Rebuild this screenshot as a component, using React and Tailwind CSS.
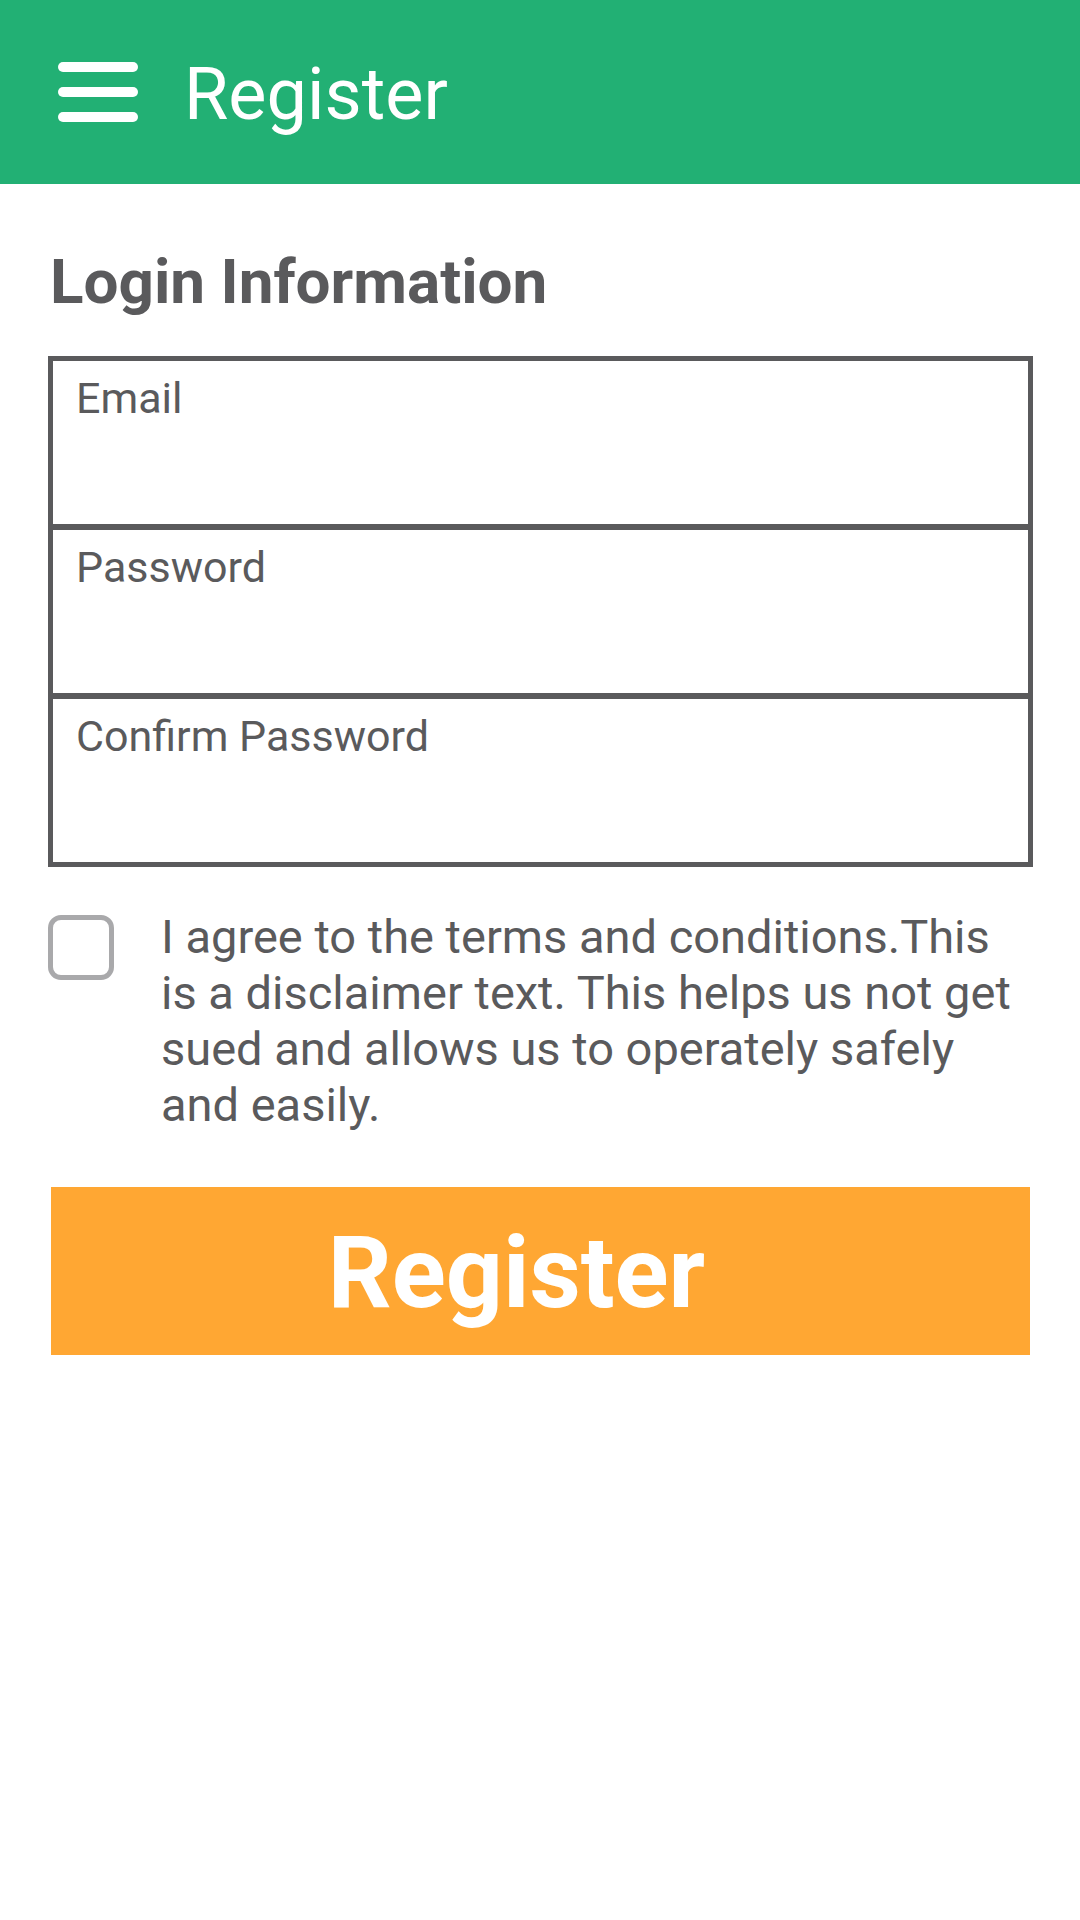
const fields = ["Email", "Password", "Confirm Password"];

const MenuIcon = () => (
  <svg width="80" height="60" viewBox="0 0 80 60" fill="none">
    <line x1="5" y1="5" x2="75" y2="5" stroke="white" strokeWidth="10" strokeLinecap="round" />
    <line x1="5" y1="30" x2="75" y2="30" stroke="white" strokeWidth="10" strokeLinecap="round" />
    <line x1="5" y1="55" x2="75" y2="55" stroke="white" strokeWidth="10" strokeLinecap="round" />
  </svg>
);

export default function App() {
  return (
    <div className="min-h-screen w-[1080px] bg-white font-['Roboto',sans-serif] text-[#5a5a5c]">
      <header className="flex h-[184px] items-center bg-[#22b074] pl-[58px]">
        <MenuIcon />
        <h1 className="ml-[46px] mt-[6px] text-[72px] font-normal leading-none text-white">Register</h1>
      </header>

      <main className="px-[48px] pt-[62px]">
        <h2 className="pl-[2px] text-[62px] font-bold leading-[71px]">Login Information</h2>

        <div className="mt-[39px] w-[985px] border-[5px] border-[#5a5a5c]">
          {fields.map((label, i) => (
            <div
              key={label}
              className={
                i > 0
                  ? "h-[169px] border-t-[6px] border-[#5a5a5c] px-[23px] pt-[13px]"
                  : "h-[163px] px-[23px] pt-[13px]"
              }
            >
              <span className="text-[43px] leading-[49px]">{label}</span>
            </div>
          ))}
        </div>

        <div className="mt-[42px] flex items-start">
          <div className="mt-[6px] h-[65px] w-[66px] shrink-0 rounded-[13px] border-[5px] border-[#a9a9ab]" />
          <p className="ml-[47px] w-[862px] text-[47px] leading-[56px]">
            I agree to the terms and conditions.This is a disclaimer text. This helps us not get sued and
            allows us to operately safely and easily.
          </p>
        </div>

        <button className="mx-[3px] mt-[54px] flex h-[168px] w-[979px] items-center justify-center bg-[#ffa733] pr-[48px] pt-[4px] text-[100px] font-bold leading-none text-white">
          Register
        </button>
      </main>
    </div>
  );
}
